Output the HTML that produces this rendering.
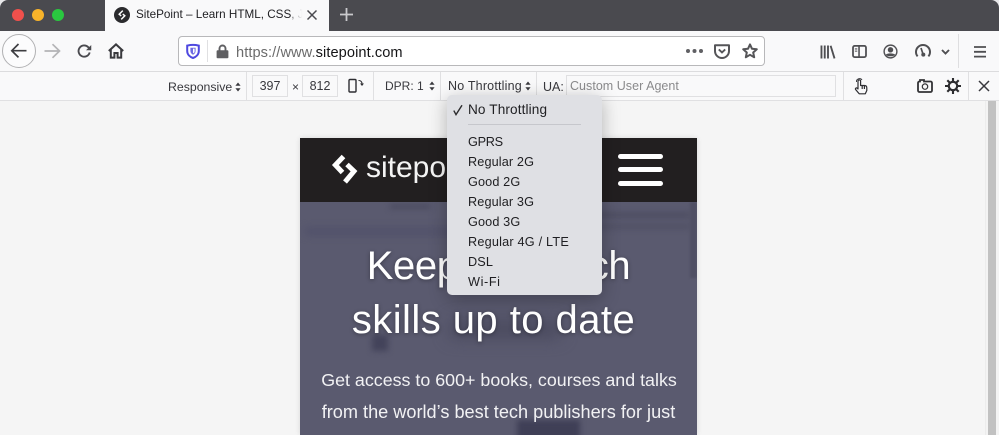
<!DOCTYPE html>
<html><head><meta charset="utf-8">
<style>
html,body{margin:0;padding:0;width:999px;height:435px;overflow:hidden;background:#f5f5f5;font-family:"Liberation Sans",sans-serif}
.a{position:absolute;white-space:nowrap}
svg{position:absolute;overflow:visible}
.t{font-size:12.5px;color:#38383d;line-height:16px}
.m{font-size:12.7px;color:#1f1f22;line-height:20px;left:468px;letter-spacing:.12px}
.v{position:absolute;width:1px;background:#e0e0e2}
.b{position:absolute;background:#f9f9fa;border:1px solid #e0e0e2;box-sizing:border-box;font-size:12.5px;color:#38383d;text-align:center;line-height:20px}
</style></head><body>
<!-- title bar -->
<div class="a" style="left:0;top:0;width:999px;height:31px;background:#4a4a4f"></div>
<div class="a" style="left:0;top:0;width:8px;height:8px;background:#e8e8ea"></div>
<div class="a" style="left:991px;top:0;width:8px;height:8px;background:#e8e8ea"></div>
<div class="a" style="left:0;top:0;width:8px;height:8px;background:#4a4a4f;border-top-left-radius:8px"></div>
<div class="a" style="left:991px;top:0;width:8px;height:8px;background:#4a4a4f;border-top-right-radius:8px"></div>
<div class="a" style="left:12px;top:9px;width:12px;height:12px;border-radius:50%;background:#f0504c"></div>
<div class="a" style="left:32px;top:9px;width:12px;height:12px;border-radius:50%;background:#f8b32a"></div>
<div class="a" style="left:52px;top:9px;width:12px;height:12px;border-radius:50%;background:#2ac840"></div>
<!-- tab -->
<div class="a" style="left:105px;top:0;width:224px;height:31px;background:#f9f9fa"></div>
<div class="a" style="left:114px;top:7px;width:16px;height:16px;border-radius:50%;background:#2b2b2e"></div>
<svg style="left:114px;top:7px" width="16" height="16" viewBox="0 0 16 16"><path d="M8.8 3.6 5.2 7.2 7.2 9M7.2 12.4 10.8 8.8 8.8 7" fill="none" stroke="#fff" stroke-width="1.5"/></svg>
<div class="a" style="left:136px;top:7px;width:167px;overflow:hidden;font-size:11.7px;line-height:16px;color:#1f1f22">SitePoint – Learn HTML, CSS, JavaScript</div>
<div class="a" style="left:291px;top:5px;width:12px;height:20px;background:linear-gradient(90deg,rgba(249,249,250,.3),#f9f9fa 95%)"></div>
<svg style="left:306px;top:9px" width="12" height="12" viewBox="0 0 12 12"><path d="M1.5 1.5 10.5 10.5M10.5 1.5 1.5 10.5" stroke="#4a4a4f" stroke-width="1.5" fill="none"/></svg>
<svg style="left:339px;top:7px" width="15" height="15" viewBox="0 0 15 15"><path d="M7.5 1V14M1 7.5H14" stroke="#c9c9cc" stroke-width="1.8" fill="none"/></svg>
<!-- nav bar -->
<div class="a" style="left:0;top:31px;width:999px;height:40px;background:#f9f9fa"></div>
<div class="a" style="left:0;top:71px;width:999px;height:1px;background:#dcdcde"></div>
<div class="a" style="left:2px;top:34px;width:34px;height:34px;box-sizing:border-box;border-radius:50%;border:1px solid #b1b1b3;background:#fcfcfd"></div>
<svg style="left:10px;top:42px" width="18" height="18" viewBox="0 0 18 18"><path d="M8.5 2 1.8 8.7 8.5 15.4M2 8.7H16.5" fill="none" stroke="#3d3d41" stroke-width="1.7"/></svg>
<svg style="left:44px;top:43px" width="17" height="16" viewBox="0 0 17 16"><path d="M8.5 1.2 15.5 8 8.5 14.8M15 8H0.5" fill="none" stroke="#b4b4b6" stroke-width="1.7"/></svg>
<svg style="left:77px;top:44px" width="15" height="15" viewBox="0 0 16 16"><path d="M13.5 9A6 6 0 1 1 12 3.4L14.4 5.6" fill="none" stroke="#4a4a4f" stroke-width="2"/><path d="M15.2 1V6.6H9.6Z" fill="#4a4a4f"/></svg>
<svg style="left:108px;top:43px" width="16" height="16" viewBox="0 0 16 16"><path d="M.8 8 8 1.4 15.2 8M2.8 6.6V14.6H6.4V10H9.6V14.6H13.2V6.6" fill="none" stroke="#3a3a3e" stroke-width="2"/></svg>
<!-- url bar -->
<div class="a" style="left:178px;top:36px;width:587px;height:30px;box-sizing:border-box;background:#fff;border:1px solid #b8b8ba;border-radius:4px"></div>
<svg style="left:186px;top:44px" width="14" height="15" viewBox="0 0 14 15"><path d="M1.2 1.6C3 1.2 5 .9 7 .9S11 1.2 12.8 1.6V7C12.8 10.6 10 13 7 14 4 13 1.2 10.6 1.2 7Z" fill="none" stroke="#4f49e0" stroke-width="2"/><path d="M4.4 3.8H9.6V7C9.6 8.8 8.4 10 7 10.8 5.6 10 4.4 8.8 4.4 7Z" fill="#6f6ae2"/><path d="M7 4.6H8.6V8.2L7 9.4Z" fill="#fff"/></svg>
<div class="a" style="left:207px;top:40px;width:1px;height:22px;background:#e0e0e2"></div>
<svg style="left:216px;top:44px" width="13" height="15" viewBox="0 0 13 15"><path d="M3.5 6.5V4.5A3 3 0 0 1 9.5 4.5V6.5" fill="none" stroke="#5f5f62" stroke-width="1.9"/><rect x=".6" y="6.2" width="11.8" height="8" rx="1" fill="#5f5f62"/></svg>
<div class="a" style="left:236px;top:44px;font-size:14.6px;line-height:18px;color:#6b6b6b;letter-spacing:.08px">https://www.<span style="color:#141416">sitepoint.com</span></div>
<svg style="left:686px;top:48px" width="17" height="6" viewBox="0 0 17 6"><circle cx="2" cy="3" r="2" fill="#606064"/><circle cx="8.5" cy="3" r="2" fill="#606064"/><circle cx="15" cy="3" r="2" fill="#606064"/></svg>
<svg style="left:714px;top:44px" width="16" height="15" viewBox="0 0 16 15"><path d="M1 1.2H15V7A7 7 0 0 1 1 7Z" fill="none" stroke="#555558" stroke-width="2" stroke-linejoin="round"/><path d="M4.8 5.4 8 8.4 11.2 5.4" fill="none" stroke="#555558" stroke-width="1.9"/></svg>
<svg style="left:742px;top:43px" width="16" height="16" viewBox="0 0 16 16"><path d="M8 1.4 10 5.8 14.8 6.3 11.2 9.5 12.2 14.3 8 11.8 3.8 14.3 4.8 9.5 1.2 6.3 6 5.8Z" fill="none" stroke="#555558" stroke-width="2" stroke-linejoin="round"/></svg>
<!-- right icons -->
<svg style="left:820px;top:45px" width="16" height="14" viewBox="0 0 16 15"><path d="M1 .5V14.5M4.5 .5V14.5M8 .5V14.5M10.8 .8 15 14.4" fill="none" stroke="#4f4f52" stroke-width="2"/></svg>
<svg style="left:852px;top:45px" width="15" height="13" viewBox="0 0 16 14"><rect x="1" y="1" width="14" height="12" rx="1.8" fill="none" stroke="#4f4f52" stroke-width="1.9"/><path d="M7.5 1V13" stroke="#4f4f52" stroke-width="1.7"/><path d="M3 4.2H5.6M3 6.6H5.6" stroke="#4f4f52" stroke-width="1.2"/></svg>
<svg style="left:883px;top:44px" width="15" height="15" viewBox="0 0 16 16"><circle cx="8" cy="8" r="6.8" fill="none" stroke="#4f4f52" stroke-width="1.5"/><circle cx="8" cy="6.2" r="2.9" fill="#4f4f52"/><path d="M3 11.4C4.5 9.6 11.5 9.6 13 11.4 11.5 13.6 4.5 13.6 3 11.4Z" fill="#4f4f52"/></svg>
<svg style="left:915px;top:43px" width="16" height="15" viewBox="0 0 16 15"><path d="M2.6 13.4A7 7 0 1 1 13.4 13.4" fill="none" stroke="#4f4f52" stroke-width="2"/><path d="M6 5 8 11" stroke="#4f4f52" stroke-width="1.7"/><circle cx="8.3" cy="11.6" r="2" fill="#4f4f52"/></svg>
<svg style="left:941px;top:49px" width="9" height="6" viewBox="0 0 9 6"><path d="M1 1 4.5 4.5 8 1" fill="none" stroke="#4f4f52" stroke-width="1.9"/></svg>
<div class="a" style="left:958px;top:34px;width:1px;height:34px;background:#dedee0"></div>
<svg style="left:974px;top:46px" width="12" height="12" viewBox="0 0 12 12"><path d="M0 1H12M0 5.8H12M0 10.6H12" stroke="#4f4f52" stroke-width="1.8"/></svg>
<!-- devtools bar -->
<div class="a" style="left:0;top:72px;width:999px;height:28px;background:#f9f9fa"></div>
<div class="a" style="left:0;top:100px;width:999px;height:1px;background:#e0e0e2"></div>
<div class="a t" style="left:168px;top:79px;font-size:12.3px">Responsive</div>
<svg style="left:235px;top:82px" width="6" height="10" viewBox="0 0 6 10"><path d="M3 .5 5.6 3.8H.4ZM3 9.5 .4 6.2H5.6Z" fill="#38383d"/></svg>
<div class="v" style="left:246px;top:72px;height:28px"></div>
<div class="b" style="left:252px;top:75px;width:36px;height:22px">397</div>
<div class="a" style="left:292px;top:79px;font-size:12px;line-height:16px;color:#38383d">×</div>
<div class="b" style="left:302px;top:75px;width:36px;height:22px">812</div>
<svg style="left:348px;top:78px" width="17" height="15" viewBox="0 0 17 15"><rect x="1" y="1.5" width="7" height="12.5" rx="1" fill="none" stroke="#2e2e32" stroke-width="1.4"/><path d="M10.5 2.5C13 2.5 14 3.5 14 6" fill="none" stroke="#2e2e32" stroke-width="1.1"/><path d="M12 5.5H16L14 8Z" fill="#2e2e32"/></svg>
<div class="v" style="left:373px;top:72px;height:28px"></div>
<div class="a t" style="left:385px;top:78px;font-size:12px">DPR: 1</div>
<svg style="left:429px;top:81px" width="6" height="10" viewBox="0 0 6 10"><path d="M3 .5 5.6 3.8H.4ZM3 9.5 .4 6.2H5.6Z" fill="#38383d"/></svg>
<div class="v" style="left:440px;top:72px;height:28px"></div>
<div class="a t" style="left:448px;top:78px;letter-spacing:.2px">No Throttling</div>
<svg style="left:525px;top:81px" width="6" height="10" viewBox="0 0 6 10"><path d="M3 .5 5.6 3.8H.4ZM3 9.5 .4 6.2H5.6Z" fill="#38383d"/></svg>
<div class="v" style="left:536px;top:72px;height:28px"></div>
<div class="a t" style="left:543px;top:79px">UA:</div>
<div class="b" style="left:566px;top:75px;width:270px;height:22px;text-align:left;padding-left:3px;color:#8a8a8c;letter-spacing:.03px">Custom User Agent</div>
<div class="v" style="left:843px;top:72px;height:28px"></div>
<svg style="left:854px;top:78px" width="14" height="17" viewBox="0 0 14 17"><path d="M4 8.5V3.2A1.3 1.3 0 0 1 6.6 3.2V7.5H10.5C12 7.5 12.8 8.5 12.8 10V12.5L11.3 15.8H5.2L1.6 11.5C1 10.6 2.2 9.4 3.2 10.2L4 11ZM8.2 8V11M10.4 8V11" fill="#f9f9fa" stroke="#2e2e32" stroke-width="1.2" stroke-linejoin="round"/><path d="M2.5 4A3 3 0 0 1 8 2" fill="none" stroke="#2e2e32" stroke-width=".9"/></svg>
<svg style="left:917px;top:79px" width="16" height="14" viewBox="0 0 16 14"><path d="M3 1H7V2.5H13.5A1.5 1.5 0 0 1 15 4V11.5A1.5 1.5 0 0 1 13.5 13H2.5A1.5 1.5 0 0 1 1 11.5V4A1.5 1.5 0 0 1 2.5 2.5H3Z" fill="none" stroke="#333336" stroke-width="1.8"/><circle cx="8" cy="7.6" r="2.7" fill="none" stroke="#333336" stroke-width="1.2"/></svg>
<svg style="left:945px;top:78px" width="16" height="16" viewBox="0 0 16 16"><circle cx="8" cy="8" r="4.2" fill="none" stroke="#2c2c2f" stroke-width="2.2"/><path d="M8 0V3.5M8 12.5V16M0 8H3.5M12.5 8H16M2.3 2.3 4.8 4.8M11.2 11.2 13.7 13.7M13.7 2.3 11.2 4.8M4.8 11.2 2.3 13.7" stroke="#2c2c2f" stroke-width="2.1"/></svg>
<div class="v" style="left:968px;top:72px;height:28px"></div>
<svg style="left:978px;top:80px" width="12" height="12" viewBox="0 0 12 12"><path d="M1 1 11 11M11 1 1 11" stroke="#38383d" stroke-width="1.5"/></svg>
<!-- viewport scrollbar -->
<div class="a" style="left:985px;top:101px;width:14px;height:334px;background:#f3f3f3;border-left:1px solid #ececec;box-sizing:border-box"></div>
<div class="a" style="left:988px;top:101px;width:8px;height:334px;background:#c1c1c1"></div>
<!-- page -->
<div class="a" style="left:300px;top:138px;width:397px;height:297px;box-shadow:0 0 5px rgba(0,0,0,.12);background:#5b5b70;overflow:hidden">
  <div class="a" style="left:0;top:0;width:397px;height:64px;background:#221f20"></div>
  <svg style="left:28px;top:12px" width="36" height="38" viewBox="0 0 36 38"><path d="M15.5 6.5 7.4 15 14.5 22.5" fill="none" stroke="#fff" stroke-width="5"/><path d="M17 32 26 21.2 19 14.5" fill="none" stroke="#fff" stroke-width="5"/></svg>
  <div class="a" style="left:66px;top:12px;font-size:30px;line-height:36px;color:#f4f4f4">sitepoint</div>
  <div class="a" style="left:318px;top:16px;width:45px;height:5px;border-radius:3px;background:#fff"></div>
  <div class="a" style="left:318px;top:29px;width:45px;height:5px;border-radius:3px;background:#fff"></div>
  <div class="a" style="left:318px;top:43px;width:45px;height:5px;border-radius:3px;background:#fff"></div>
  <div class="a" style="left:0;top:64px;width:397px;height:233px;background:#5a5a6f;overflow:hidden">
    <div class="a" style="left:5px;top:26px;width:170px;height:7px;background:#50506a;filter:blur(4px)"></div>
    <div class="a" style="left:90px;top:2px;width:40px;height:5px;background:#4c4c60;filter:blur(3px)"></div>
    <div class="a" style="left:290px;top:10px;width:100px;height:6px;background:#4e4e62;filter:blur(3px)"></div>
    <div class="a" style="left:230px;top:22px;width:160px;height:5px;background:#505064;filter:blur(3px)"></div>
    <div class="a" style="left:72px;top:133px;width:16px;height:16px;background:#43435a;filter:blur(3px)"></div>
    <div class="a" style="left:217px;top:218px;width:63px;height:30px;background:#3f3f56;filter:blur(3px)"></div>
    <div class="a" style="left:150px;top:118px;width:110px;height:18px;background:#4a4a5e;filter:blur(8px)"></div>
    <div class="a" style="left:390px;top:0;width:7px;height:76px;background:#4f4f63;filter:blur(1px)"></div>
  </div>
  <div class="a" style="left:0;top:102px;width:397px;text-align:center;font-size:40px;line-height:52px;letter-spacing:-.4px;color:#fff;text-shadow:0 1px 4px rgba(0,0,0,.35)">Keep your tech</div>
  <div class="a" style="left:0;top:156px;width:387px;text-align:center;font-size:40px;line-height:52px;letter-spacing:.45px;color:#fff;text-shadow:0 1px 4px rgba(0,0,0,.35)">skills up to date</div>
  <div class="a" style="left:0;top:226px;width:398px;text-align:center;font-size:17.85px;line-height:32px;color:#f2f2f4">Get access to 600+ books, courses and talks</div>
  <div class="a" style="left:0;top:258px;width:397px;text-align:center;font-size:18.15px;line-height:32px;color:#f2f2f4">from the world’s best tech publishers for just</div>
</div>
<!-- dropdown -->
<div class="a" style="left:447px;top:95px;width:155px;height:200px;background:#dfe0e4;border-radius:5px;box-shadow:0 4px 18px rgba(0,0,0,.28)"></div>
<svg style="left:452px;top:104px" width="12" height="12" viewBox="0 0 12 12"><path d="M1.8 6.6 4 10.6 10 1.2" fill="none" stroke="#2c2c2e" stroke-width="1.4"/></svg>
<div class="a m" style="top:100px;font-size:13.6px">No Throttling</div>
<div class="a" style="left:468px;top:124px;width:113px;height:1px;background:#c6c7cc"></div>
<div class="a m" style="top:132px;letter-spacing:-.3px">GPRS</div>
<div class="a m" style="top:152px">Regular 2G</div>
<div class="a m" style="top:172px">Good 2G</div>
<div class="a m" style="top:192px">Regular 3G</div>
<div class="a m" style="top:212px">Good 3G</div>
<div class="a m" style="top:232px;letter-spacing:.2px">Regular 4G / LTE</div>
<div class="a m" style="top:252px">DSL</div>
<div class="a m" style="top:272px;letter-spacing:.6px">Wi-Fi</div>
</body></html>
